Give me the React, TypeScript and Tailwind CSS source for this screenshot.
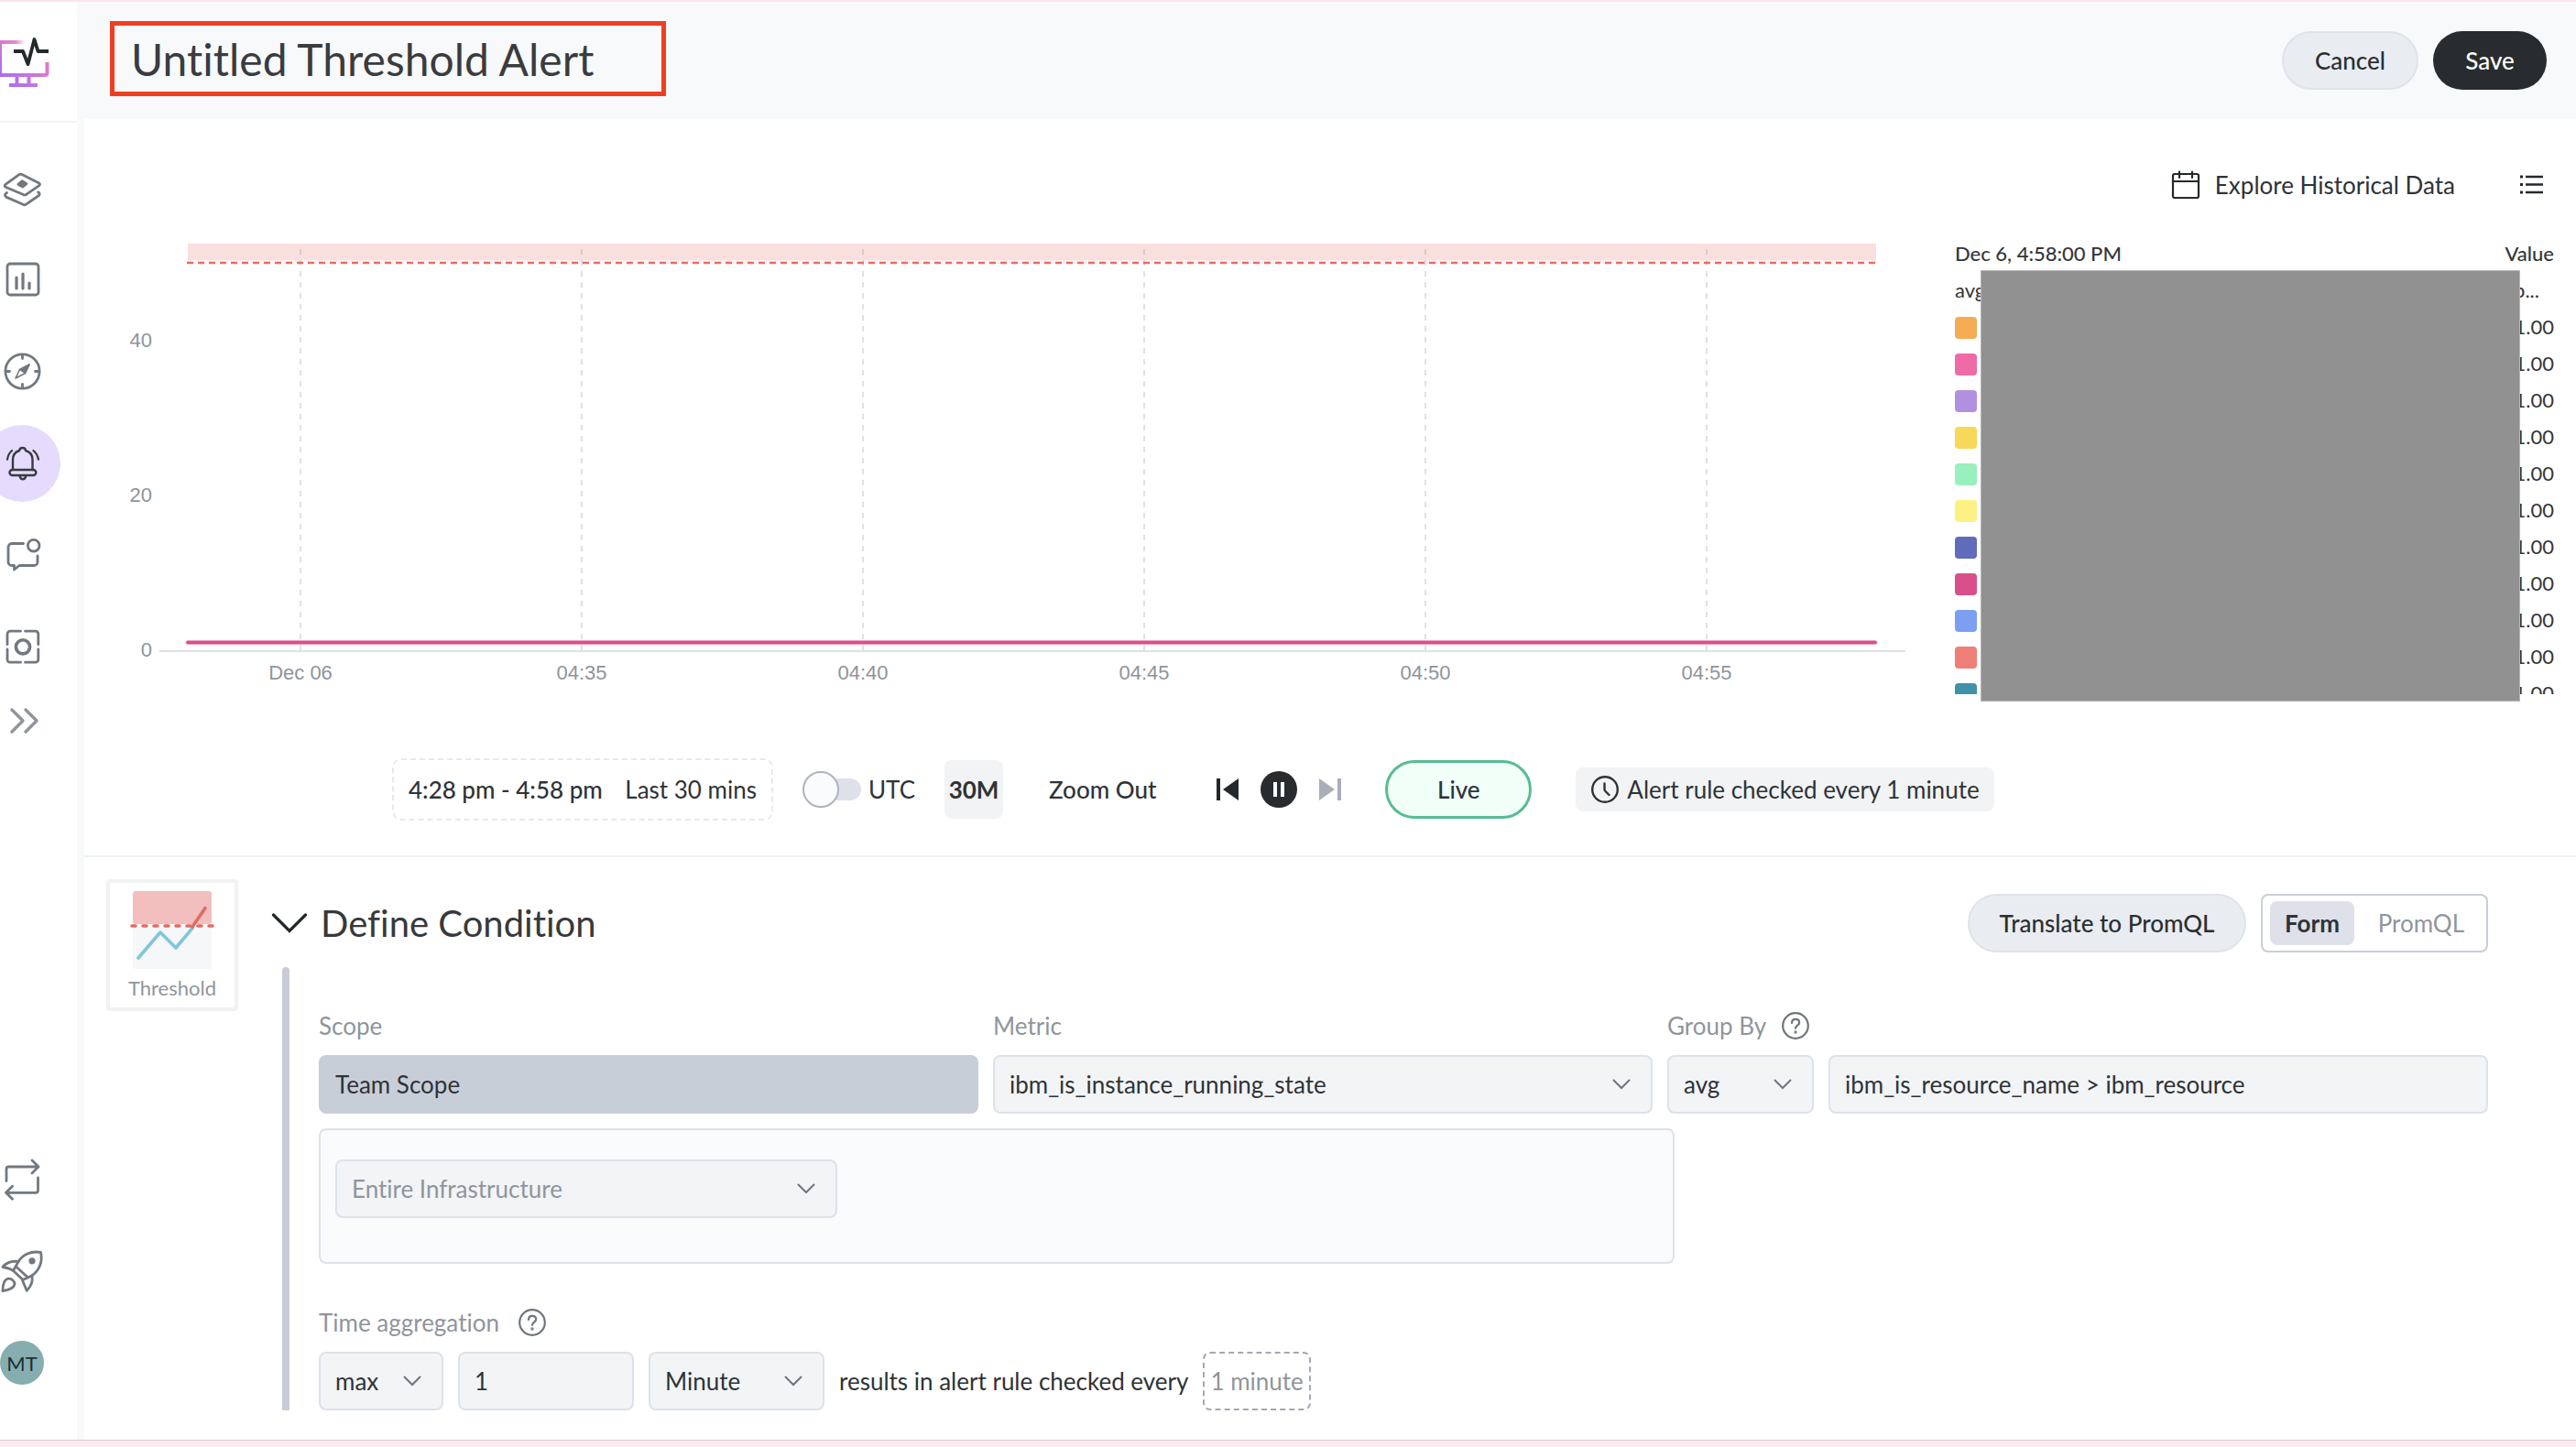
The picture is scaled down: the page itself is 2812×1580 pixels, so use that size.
import { useState } from 'react';
import type { ReactNode } from 'react';
import { clsx } from 'clsx';

const SERIES = [
  { color: '#f5ac55', value: '1.00' },
  { color: '#ee6ba5', value: '1.00' },
  { color: '#b191df', value: '1.00' },
  { color: '#f7d858', value: '1.00' },
  { color: '#98f0bd', value: '1.00' },
  { color: '#fdf184', value: '1.00' },
  { color: '#5f6cba', value: '1.00' },
  { color: '#d84f8b', value: '1.00' },
  { color: '#7c9ff1', value: '1.00' },
  { color: '#ef7e77', value: '1.00' },
  { color: '#4192a8', value: '1.00' },
];

const TIME_TICKS = ['Dec 06', '04:35', '04:40', '04:45', '04:50', '04:55'];

const VALUE_TICKS = [
  { label: '40', y: 121 },
  { label: '20', y: 290 },
  { label: '0', y: 459 },
];

/* ---------- icons ---------- */

function NavIcon({ children, className }: { children: ReactNode; className?: string }) {
  return (
    <svg
      viewBox="0 0 48 48"
      fill="none"
      stroke="currentColor"
      strokeWidth="2.8"
      strokeLinecap="round"
      strokeLinejoin="round"
      className={clsx('h-12 w-12 shrink-0', className)}
      aria-hidden="true"
    >
      {children}
    </svg>
  );
}

const LayersIcon = () => (
  <NavIcon>
    <path d="M20.5 8.8q2-1.2 4 0L42.7 18q1.6 1.2 0 2.6L28.600 30.300q-1.800 1.200-3.600 0L6 22.200q-1.800-1.200 0-2.800z" />
    <path d="M7.500 28.500q-3.600 2.200-.8 4.600l18.500 8.200q1.800 1 3.600-.4l13.600-9.400q2-2-.8-3.800" />
    <path d="M24.300 15.600l4.600 3-4 3.400-5-2.600z" fill="currentColor" />
  </NavIcon>
);

const DashboardIcon = () => (
  <NavIcon>
    <rect x="8" y="6" width="34" height="34" rx="3" />
    <path d="M18 21v12M25 17v16M32 27v6" strokeWidth="3.2" />
  </NavIcon>
);

const CompassIcon = () => (
  <NavIcon>
    <circle cx="24.5" cy="23.5" r="18.6" />
    <path d="M24.5 5.500v4M24.500 37.500v4M6.500 23.500h4M38.500 23.500h4" />
    <path d="M32 16L21.500 21.500l-4.500 9.500L27.500 25.500z" strokeWidth="1.6" />
    <path d="M32 16L21.500 21.500l6 4z" fill="currentColor" strokeWidth="1.4" />
  </NavIcon>
);

const BellIcon = () => (
  <NavIcon className="text-[#393b40]">
    <path d="M14 31V20c0-5 2.600-8.600 7.200-10 .2-2 1.300-3 3.400-3s3.200 1 3.400 3c4.600 1.400 7.500 5 7.500 10v11" strokeWidth="2.4" />
    <rect x="10.5" y="31" width="28.8" height="6" rx="3" strokeWidth="2.4" />
    <path d="M21.500 37.500c.4 2.600 1.600 3.800 3.400 3.800s3-1.200 3.400-3.800M13 10c-2.800 2.400-4.400 5.600-5 9.600M36.500 10c2.800 2.400 4.800 5.600 5.400 9.600" strokeWidth="2.2" />
  </NavIcon>
);

const CommentIcon = () => (
  <NavIcon>
    <path d="M25.500 11.500H13a4 4 0 0 0-4 4v16a4 4 0 0 0 4 4h2.500V40l5.500-4.500h16a4 4 0 0 0 4-4V25" />
    <circle cx="36.7" cy="13.7" r="6.3" />
  </NavIcon>
);

const ScanIcon = () => (
  <NavIcon>
    <path d="M22.500 7.200H11a3 3 0 0 0-3 3v11.500M27.500 7.200h11.300a3 3 0 0 1 3 3v11.500M22.500 41.200H11a3 3 0 0 1-3-3V27M27.500 41.200h11.300a3 3 0 0 0 3-3V27" />
    <circle cx="25" cy="24.3" r="7.6" strokeWidth="3.6" />
  </NavIcon>
);

const ExpandIcon = () => (
  <NavIcon className="text-[#8f959d]">
    <path d="M13 12l12 12-12 12M28 12l12 12-12 12" strokeWidth="3.4" />
  </NavIcon>
);

const LoopIcon = () => (
  <NavIcon>
    <path d="M7 25.500V12.500Q7 10 9.500 10H42M35 3l7 7-7 7M41.500 22v13.800q0 2.500-2.500 2.500H6.500M13.500 31.300l-7 7 7 7" />
  </NavIcon>
);

const RocketIcon = () => (
  <NavIcon>
    <path d="M44.500 3.500C34 1.500 24.500 6 19.500 14.500L14.500 23.500 25 33.500 34.500 29C42.500 24 47 14 44.500 3.500z" />
    <path d="M18 19.500L30.500 31M20 13.500C13 12.500 7 14.500 2.900 19.500c4.500.8 8.500 2 11.600 4M35 29.500c1 6-1.500 11.500-5.800 15.700-1.700-4-3-7.200-4.800-11.200" />
    <path d="M3 45.500C3 38.500 5 33 9 32.200c4-.2 7.200 2.800 7 6.200-1 4-6 6.200-13 7.100z" />
    <circle cx="35" cy="12.8" r="2.2" fill="currentColor" />
  </NavIcon>
);

function Logo() {
  return (
    <svg viewBox="0 0 56 56" className="h-14 w-14" fill="none" role="img" aria-label="Monitoring">
      <defs>
        <linearGradient id="frame" gradientUnits="userSpaceOnUse" x1="0" y1="56" x2="56" y2="28">
          <stop offset="0" stopColor="#a56cf5" />
          <stop offset="0.4" stopColor="#b973ea" />
          <stop offset="1" stopColor="#e67cc0" />
        </linearGradient>
        <linearGradient id="edge" gradientUnits="userSpaceOnUse" x1="0" y1="0" x2="28" y2="0">
          <stop offset="0" stopColor="#d478cf" />
          <stop offset="0.6" stopColor="#e38bc9" />
          <stop offset="1" stopColor="#e38bc9" stopOpacity="0" />
        </linearGradient>
        <linearGradient id="side" x1="0" y1="0" x2="0" y2="1">
          <stop offset="0" stopColor="#d478cf" />
          <stop offset="1" stopColor="#a56cf5" />
        </linearGradient>
      </defs>
      <rect x="0" y="5" width="27" height="4" fill="url(#edge)" />
      <rect x="0" y="6" width="2" height="38" fill="url(#side)" />
      <path d="M0 43h49q2.500 0 2.500-2.500V29M18.500 44v10M31.500 44v10M10 54h31" stroke="url(#frame)" strokeWidth="4" />
      <path d="M15 17h10l5.500 14L37.500 4l4 13H53" stroke="#24292c" strokeWidth="3.8" strokeLinejoin="round" />
    </svg>
  );
}

function HelpIcon() {
  return (
    <svg viewBox="0 0 32 32" className="h-8 w-8" fill="none" stroke="#6f757d" strokeWidth="2.2" strokeLinecap="round" aria-hidden="true">
      <circle cx="16" cy="16" r="13.8" />
      <path d="M12 13c0-2.500 1.600-4.200 4-4.200s4.200 1.500 4.200 3.800c0 3-4.200 3.200-4.200 6.200" />
      <circle cx="16" cy="23" r="0.6" fill="#6f757d" />
    </svg>
  );
}

/* ---------- form pieces ---------- */

function SelectField({
  label,
  value,
  className,
  muted = false,
}: {
  label: string;
  value: string;
  className?: string;
  muted?: boolean;
}) {
  return (
    <div className={clsx('relative', className)}>
      <select
        aria-label={label}
        defaultValue={value}
        className={clsx(
          'h-16 w-full appearance-none rounded-lg border-2 border-[#dde2ea] bg-[#f2f4f6] px-4 text-[26px]',
          muted ? 'text-[#8f959d]' : 'text-[#2f3336]'
        )}
      >
        <option>{value}</option>
      </select>
      <svg
        viewBox="0 0 20 12"
        className="pointer-events-none absolute top-[26px] right-6 h-3 w-5"
        fill="none"
        stroke="#6f757d"
        strokeWidth="2"
        strokeLinecap="round"
        aria-hidden="true"
      >
        <path d="M1.500 1.500L10 10l8.500-8.500" />
      </svg>
    </div>
  );
}

/* ---------- page sections ---------- */

function Sidebar() {
  return (
    <aside className="flex w-[84px] shrink-0 flex-col">
      <div className="flex h-[132px] items-center border-b-2 border-[#f3f4f6]">
        <Logo />
      </div>
      <nav className="flex flex-1 flex-col pt-[22px] pb-[34px] text-[#72787f]" aria-label="Main">
        {[LayersIcon, DashboardIcon, CompassIcon].map((Icon, i) => (
          <button key={i} className="flex h-[100px] w-12 items-center justify-center">
            <Icon />
          </button>
        ))}
        <button className="flex h-[100px] w-12 items-center justify-center" aria-label="Alerts">
          <span className="flex h-[84px] w-[84px] shrink-0 items-center justify-center rounded-full bg-[#e5dbfd]">
            <BellIcon />
          </span>
        </button>
        {[CommentIcon, ScanIcon].map((Icon, i) => (
          <button key={i} className="flex h-[100px] w-12 items-center justify-center">
            <Icon />
          </button>
        ))}
        <button className="flex h-[62px] w-12 items-center justify-center" aria-label="Expand">
          <ExpandIcon />
        </button>
        <div className="flex-1" />
        {[LoopIcon, RocketIcon].map((Icon, i) => (
          <button key={i} className="flex h-[100px] w-12 items-center justify-center">
            <Icon />
          </button>
        ))}
        <div className="flex h-[100px] w-12 items-center justify-center">
          <button className="h-12 w-12 rounded-full bg-[#86adb0] text-[22px] text-[#1d2f33]">MT</button>
        </div>
      </nav>
    </aside>
  );
}

function Header() {
  return (
    <header className="flex h-32 items-center gap-4 bg-[#f8f9fb] pr-8 pl-9">
      <input
        aria-label="Alert name"
        defaultValue="Untitled Threshold Alert"
        className="mb-1 h-[82px] w-[607px] border-[5px] border-[#ee3f23] bg-transparent px-[18px] text-5xl text-[#3a3c3e]"
      />
      <div className="flex-1" />
      <button className="h-16 w-[149px] rounded-full border-2 border-[#dfe3ea] bg-[#e9ecf1] text-[26px] font-medium text-[#2b2f32]">
        Cancel
      </button>
      <button className="h-16 w-[124px] rounded-full bg-[#282c2e] text-[26px] font-medium text-white">Save</button>
    </header>
  );
}

function ThresholdChart() {
  return (
    <svg viewBox="0 0 1956 492" className="w-full min-w-0 flex-1" role="img" aria-label="Metric preview">
      <rect x="81" y="8" width="1843" height="18" fill="#f9e0df" />
      <rect x="81" y="26" width="1843" height="3" fill="#fcf0ef" />
      {TIME_TICKS.map((tick, i) => (
        <line
          key={tick}
          x1={204 + i * 307}
          x2={204 + i * 307}
          y1="14"
          y2="453"
          stroke="#72787f"
          strokeOpacity="0.22"
          strokeWidth="2"
          strokeDasharray="6 6"
        />
      ))}
      <line x1="80" x2="1924" y1="29" y2="29" stroke="#ec6b64" strokeWidth="2.5" strokeDasharray="7 5" />
      <line x1="50" x2="1956" y1="453" y2="453" stroke="#dde1e6" strokeWidth="2" />
      <line x1="81" x2="1923" y1="443.5" y2="443.5" stroke="#f0b3d0" strokeWidth="5" strokeLinecap="round" />
      <line x1="81" x2="1923" y1="443.5" y2="443.5" stroke="#d94f8c" strokeWidth="3.4" strokeLinecap="round" />
      <g fill="#8f949b" fontSize="22" fontFamily="'Liberation Sans', Arial, sans-serif">
        {VALUE_TICKS.map((tick) => (
          <text key={tick.label} x="42" y={tick.y} textAnchor="end">
            {tick.label}
          </text>
        ))}
        {TIME_TICKS.map((tick, i) => (
          <text key={tick} x={204 + i * 307} y="484" textAnchor="middle">
            {tick}
          </text>
        ))}
      </g>
    </svg>
  );
}

function Legend() {
  return (
    <div className="relative w-[654px] shrink-0">
      <div className="h-[500px] overflow-hidden">
        <table className="w-full text-[22px] text-[#333639]">
          <thead>
            <tr className="h-10">
              <th className="p-0 pb-1 text-left font-medium">Dec 6, 4:58:00 PM</th>
              <th className="p-0 pb-1 text-right font-medium">Value</th>
            </tr>
          </thead>
          <tbody>
            <tr className="h-10">
              <td className="p-0 pb-1">avg</td>
              <td className="p-0 pr-4 pb-1 text-right">p...</td>
            </tr>
            {SERIES.map((s) => (
              <tr key={s.color} className="h-10">
                <td className="p-0">
                  <span className="block h-6 w-6 rounded" style={{ backgroundColor: s.color }} />
                </td>
                <td className="p-0 pb-1 text-right">{s.value}</td>
              </tr>
            ))}
          </tbody>
        </table>
      </div>
      {/* series names are masked */}
      <div className="absolute top-[37px] right-[37px] left-7 h-[471px] border border-[#b5b5b5] bg-[#919191]" />
    </div>
  );
}

function TimeControls() {
  const [utc, setUtc] = useState(false);

  return (
    <div className="mt-[70px] flex items-center pl-[336px] text-[26px] whitespace-nowrap text-[#2f3336]">
      <button className="flex h-[68px] w-[416px] items-center justify-between rounded-[10px] border-2 border-dashed border-[#e6e9ee] px-4">
        <span className="font-medium">4:28 pm - 4:58 pm</span>
        <span>Last 30 mins</span>
      </button>

      <label className="ml-8 flex items-center gap-2">
        <input
          type="checkbox"
          role="switch"
          className="peer sr-only"
          checked={utc}
          onChange={(e) => setUtc(e.target.checked)}
        />
        <span className="flex h-10 w-16 items-center">
          <span className="relative z-10 h-10 w-10 shrink-0 rounded-full border-2 border-[#aeb3bd] bg-[#fafbfd]" />
          <span className="-ml-8 h-6 w-14 rounded-full bg-[#dfe1ea]" />
        </span>
        UTC
      </label>

      <button className="ml-8 h-16 w-16 rounded-lg bg-[#f1f3f4] text-center font-bold">30M</button>
      <button className="ml-[50px] font-medium">Zoom Out</button>

      <div className="ml-[66px] flex items-center gap-6">
        <button aria-label="Previous">
          <svg viewBox="0 0 24 24" className="h-6 w-6" fill="#23282b">
            <path d="M0 0h4v24H0zM24 0v24L7 12z" />
          </svg>
        </button>
        <button aria-label="Pause">
          <svg viewBox="0 0 40 40" className="h-10 w-10">
            <circle cx="20" cy="20" r="20" fill="#282c2e" />
            <path d="M14 12h4v16h-4zM22 12h4v16h-4z" fill="#fff" />
          </svg>
        </button>
        <button aria-label="Next">
          <svg viewBox="0 0 24 24" className="h-6 w-6" fill="#a9aeb9">
            <path d="M20 0h4v24h-4zM0 0v24l17-12z" />
          </svg>
        </button>
      </div>

      <button className="ml-12 h-16 w-40 rounded-full border-[3px] border-[#57bd91] bg-[#f2fef8] font-medium">Live</button>

      <div className="ml-12 flex h-12 items-center gap-2 rounded-lg bg-[#f2f3f5] px-4">
        <svg viewBox="0 0 32 32" className="h-8 w-8" fill="none" stroke="#2f3336" strokeWidth="2.4" strokeLinecap="round" aria-hidden="true">
          <circle cx="16" cy="16" r="13.8" />
          <path d="M15.500 9.500V15.500q0 1.500 1 2.500l4 4" />
        </svg>
        Alert rule checked every 1 minute
      </div>
    </div>
  );
}

function PreviewPanel() {
  return (
    <section className="border-b-2 border-[#eff1f5] pb-[38px]">
      <div className="mt-10 mb-6 flex h-16 items-center justify-end pr-8">
        <button className="flex items-center gap-4 text-[26px] text-[#2f3336]">
          <svg viewBox="0 0 32 32" className="h-8 w-8" fill="none" stroke="#24292c" strokeWidth="2.2" strokeLinecap="round" aria-hidden="true">
            <rect x="2" y="4" width="28" height="26" rx="2" />
            <path d="M2 12h28M9 1.500v6.500M23 1.500v6.500" />
          </svg>
          Explore Historical Data
        </button>
        <button className="ml-[68px]" aria-label="Toggle legend">
          <svg viewBox="0 0 32 32" className="h-8 w-8" fill="none" stroke="#24292c" strokeWidth="2.4" aria-hidden="true">
            <path d="M9 7h19M9 15.500h19M9 24h19" />
            <path d="M3 7h3M3 15.500h3M3 24h3" strokeWidth="3" />
          </svg>
        </button>
      </div>
      <div className="flex items-start gap-[54px] pr-6 pl-8">
        <ThresholdChart />
        <Legend />
      </div>
      <TimeControls />
    </section>
  );
}

function ThresholdCard() {
  return (
    <div className="flex h-36 w-36 shrink-0 flex-col items-center gap-[3px] rounded border-4 border-[#f1f3f3] pt-[9px]">
      <svg viewBox="0 0 92 86" className="h-[86px] w-[92px] shrink-0" fill="none" strokeLinecap="round" strokeLinejoin="round" aria-hidden="true">
        <rect x="3" y="0" width="86" height="36" rx="3" fill="#f2bfbe" />
        <rect x="3" y="39" width="86" height="46" rx="3" fill="#f6f7f9" />
        <path d="M9 73L33 45l17 17 18-21.500" stroke="#7fc6d8" strokeWidth="3.6" />
        <path d="M68 39L82 18.500" stroke="#e26a63" strokeWidth="3.6" />
        <path d="M2 38h88" stroke="#e46a62" strokeWidth="3.6" strokeDasharray="4 8" />
      </svg>
      <span className="text-[22px] text-[#8f959d]">Threshold</span>
    </div>
  );
}

function ConditionForm() {
  return (
    <div className="min-w-0 flex-1 pt-12 text-[26px] text-[#2f3336]">
      <div className="grid grid-cols-[1fr_1fr_160px_1fr] gap-4">
        <label htmlFor="scope" className="h-8 leading-8 text-[#8f959d]">Scope</label>
        <span className="h-8 leading-8 text-[#8f959d]">Metric</span>
        <div className="col-span-2 flex h-8 items-center gap-4 text-[#8f959d]">
          <label htmlFor="group-by">Group By</label>
          <HelpIcon />
        </div>
        <input
          id="scope"
          readOnly
          defaultValue="Team Scope"
          className="h-16 min-w-0 rounded-lg border-2 border-[#c8ced8] bg-[#c8ced8] px-4"
        />
        <SelectField label="Metric" value="ibm_is_instance_running_state" />
        <SelectField label="Group aggregation" value="avg" />
        <input
          id="group-by"
          defaultValue="ibm_is_resource_name > ibm_resource"
          className="h-16 min-w-0 rounded-lg border-2 border-[#dde2ea] bg-[#f2f4f6] px-4"
        />
      </div>

      <div className="mt-4 w-5/8 rounded-lg border-2 border-[#dde2ea] bg-[#fafbfd] px-4 pt-8 pb-12">
        <SelectField label="Infrastructure" value="Entire Infrastructure" className="w-[548px]" muted />
      </div>

      <div className="mt-12 flex h-8 items-center gap-5 text-[#8f959d]">
        <label htmlFor="interval">Time aggregation</label>
        <HelpIcon />
      </div>
      <div className="mt-4 flex items-center gap-4">
        <SelectField label="Time aggregation" value="max" className="w-[136px]" />
        <input
          id="interval"
          defaultValue="1"
          className="h-16 w-48 rounded-lg border-2 border-[#dde2ea] bg-[#f2f4f6] px-4"
        />
        <SelectField label="Unit" value="Minute" className="w-48" />
        <span>results in alert rule checked every</span>
        <span className="flex h-16 items-center rounded-lg border-2 border-dashed border-[#a3a9b3] px-1.5 text-[#8f959d]">
          1 minute
        </span>
      </div>
    </div>
  );
}

function DefineCondition() {
  return (
    <section className="flex flex-1 gap-9 pt-6 pr-24 pb-8 pl-6">
      <ThresholdCard />
      <div className="flex min-w-0 flex-1 flex-col pt-4">
        <div className="flex h-16 items-center gap-4">
          <button className="flex items-center gap-[14px]">
            <svg viewBox="0 0 40 24" className="h-6 w-10" fill="none" stroke="#23282b" strokeWidth="3.2" strokeLinecap="round" aria-hidden="true">
              <path d="M2.500 3L20 20.500 37.500 3" />
            </svg>
            <h2 className="text-[40px] text-[#38393b]">Define Condition</h2>
          </button>
          <div className="flex-1" />
          <button className="h-16 w-[304px] rounded-full border-2 border-[#dfe3ea] bg-[#e9ecf1] text-[26px] font-medium text-[#2b2f32]">
            Translate to PromQL
          </button>
          <div className="flex h-16 w-[248px] items-center justify-between rounded-lg border-2 border-[#c8ced8] px-2 text-[26px]">
            <button className="h-12 rounded-lg bg-[#dee1e9] px-4 font-bold text-[#2f3336]">Form</button>
            <button className="h-12 px-4 text-[#8f959d]">PromQL</button>
          </div>
        </div>
        <div className="mt-4 flex gap-8 pl-3">
          <div className="w-2 shrink-0 rounded-t bg-[#c8ccd8]" />
          <ConditionForm />
        </div>
      </div>
    </section>
  );
}

export default function App() {
  return (
    <div className="flex min-h-screen flex-col overflow-hidden border-t-2 border-[#fae3ec] bg-white font-[Lato,'Open_Sans',sans-serif] [font-variant-ligatures:no-common-ligatures]">
      <div className="flex flex-1">
        <Sidebar />
        <main className="flex min-w-0 flex-1 flex-col">
          <Header />
          <div className="flex flex-1 flex-col border-l-8 border-[#f8f9fa]">
            <PreviewPanel />
            <DefineCondition />
          </div>
        </main>
      </div>
      <div className="h-2 shrink-0 border-t border-[#dccbd3] bg-[#fcebf1]" />
    </div>
  );
}
